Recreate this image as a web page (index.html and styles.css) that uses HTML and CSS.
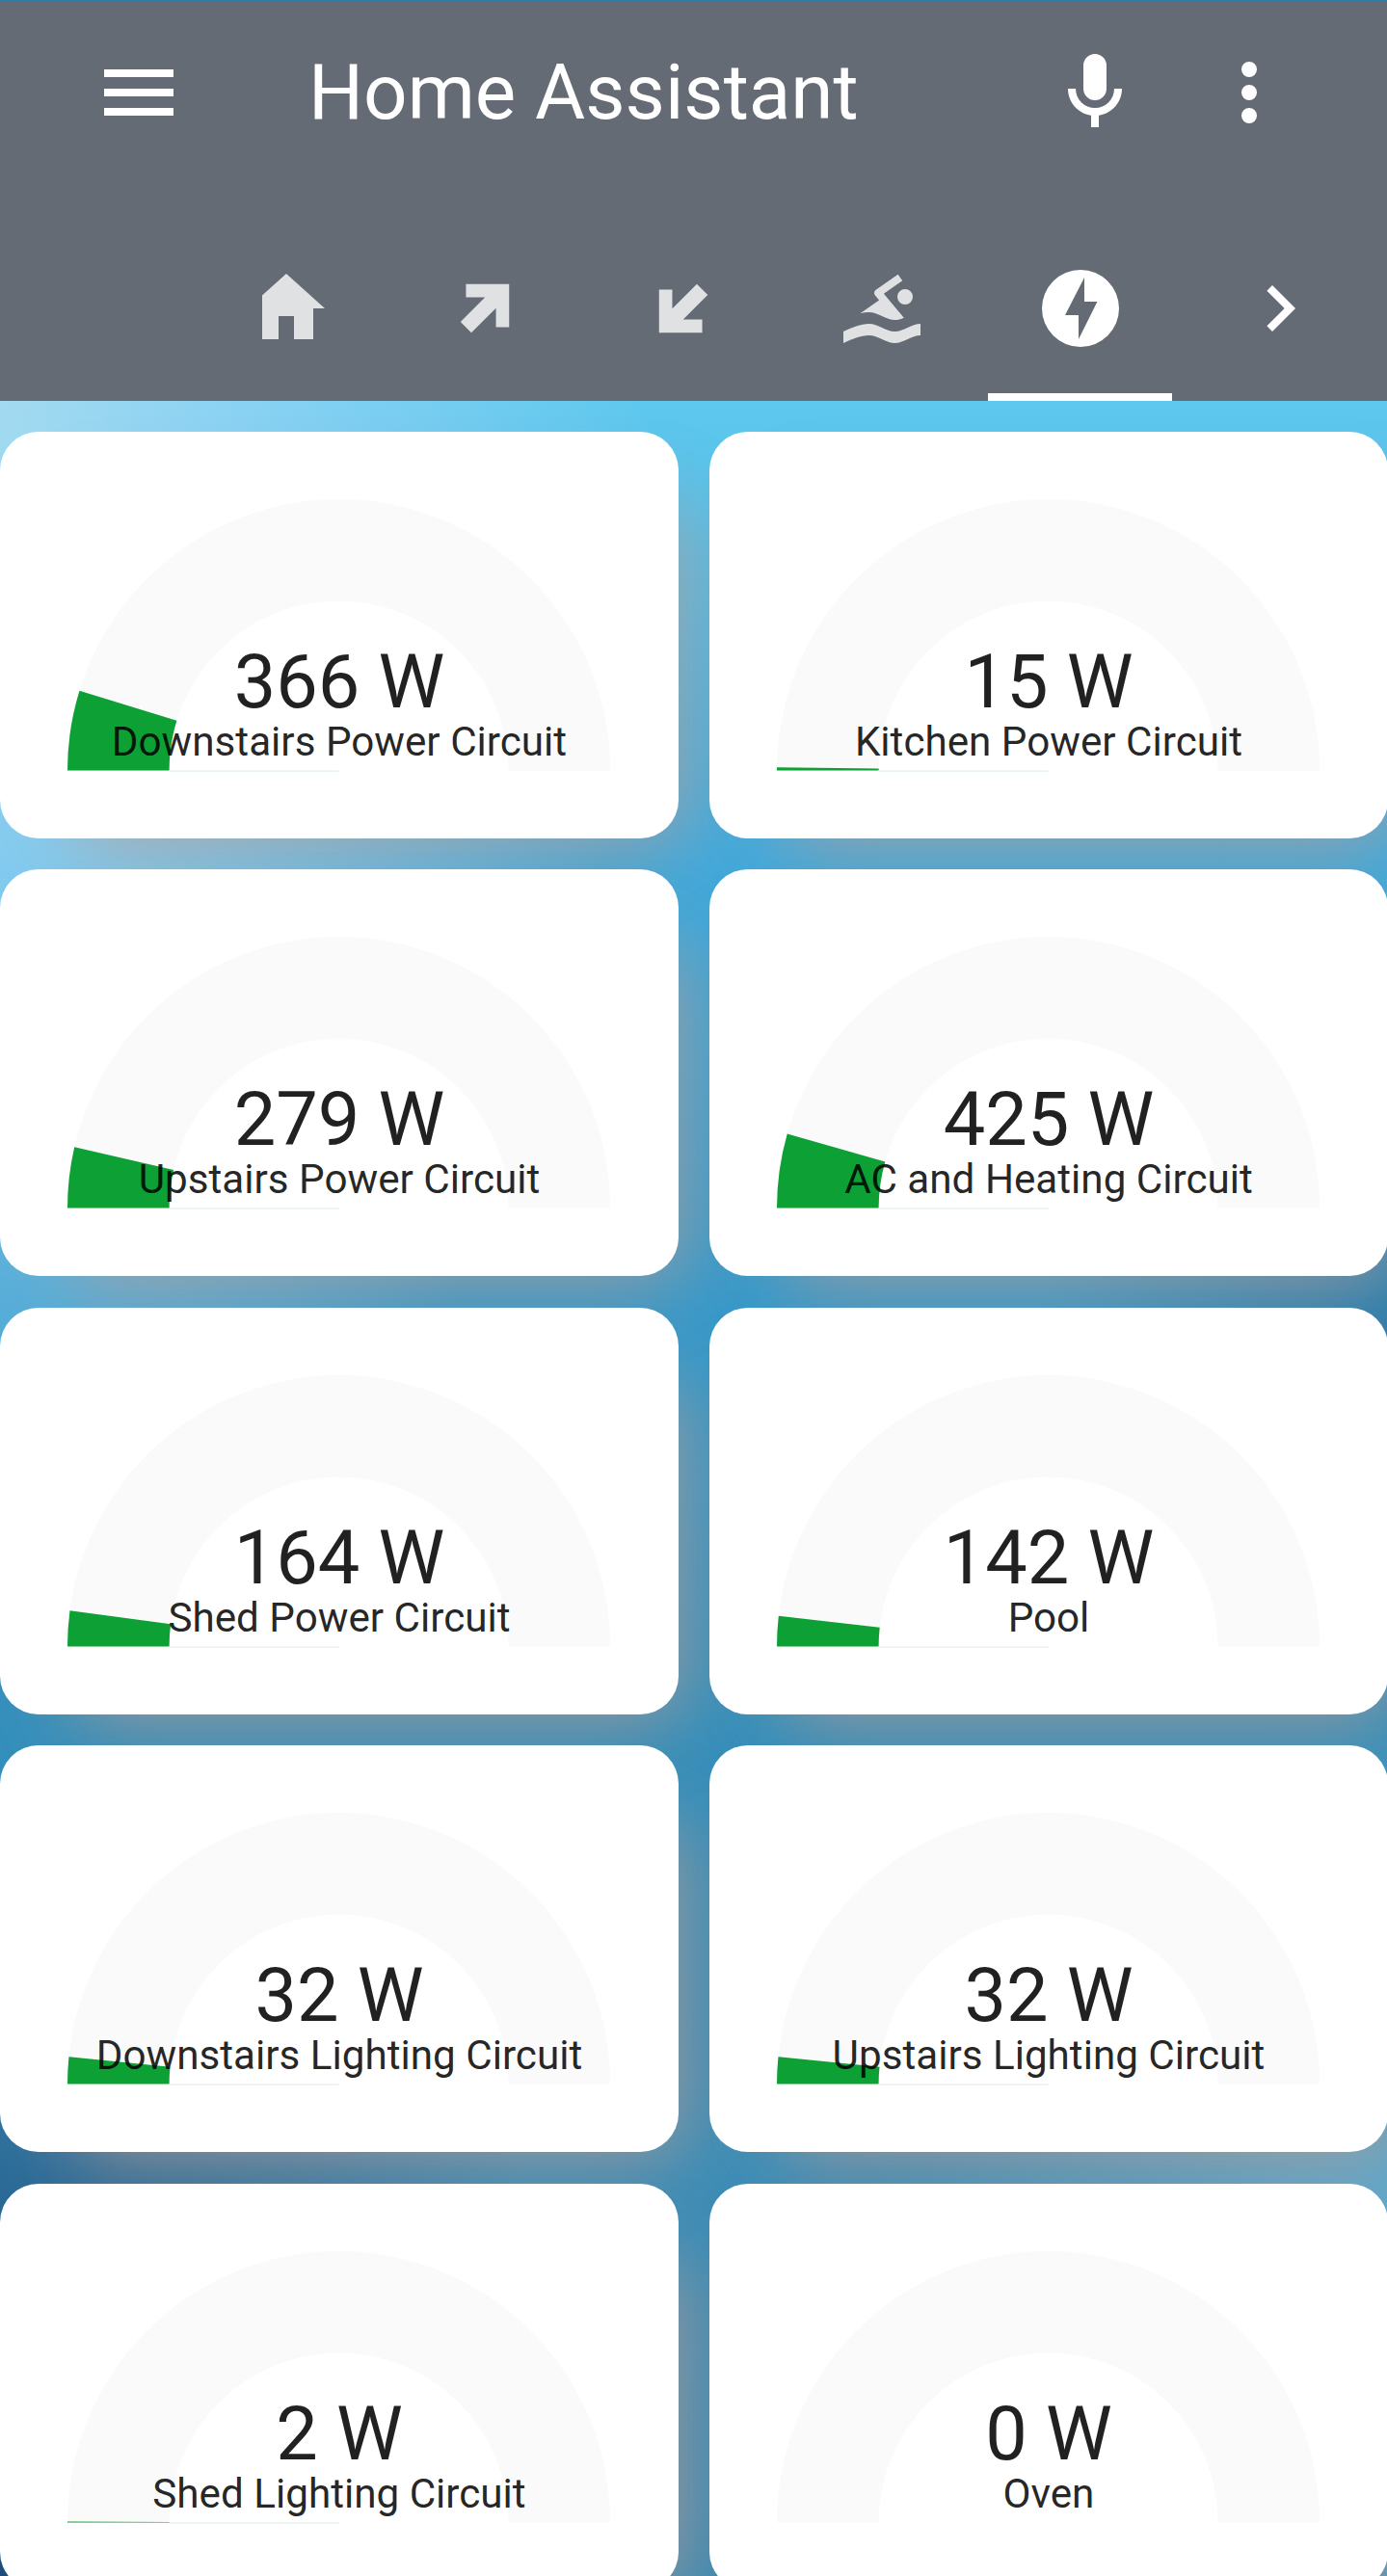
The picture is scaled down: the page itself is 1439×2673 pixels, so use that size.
FILE: index.html
```
<!DOCTYPE html>
<html lang="en">

<head>
    <meta charset="UTF-8">
    <meta name="viewport" content="width=device-width, initial-scale=1.0">
    <title>Home Assistant</title>
    <link rel="stylesheet" href="styles.css">
</head>

<body>
    <header class="header">
        <div class="toolbar">
            <svg class="icon" viewBox="0 0 24 24"><path d="M3,6H21V8H3V6M3,11H21V13H3V11M3,16H21V18H3V16Z" /></svg>
            <h1 class="title">Home Assistant</h1>
            <svg class="icon mic" viewBox="0 0 24 24"><path d="M12,2A3,3 0 0,1 15,5V11A3,3 0 0,1 12,14A3,3 0 0,1 9,11V5A3,3 0 0,1 12,2M19,11C19,14.53 16.39,17.44 13,17.93V21H11V17.93C7.61,17.44 5,14.53 5,11H7A5,5 0 0,0 12,16A5,5 0 0,0 17,11H19Z" /></svg>
            <svg class="icon" viewBox="0 0 24 24"><path d="M12,16A2,2 0 0,1 14,18A2,2 0 0,1 12,20A2,2 0 0,1 10,18A2,2 0 0,1 12,16M12,10A2,2 0 0,1 14,12A2,2 0 0,1 12,14A2,2 0 0,1 10,12A2,2 0 0,1 12,10M12,4A2,2 0 0,1 14,6A2,2 0 0,1 12,8A2,2 0 0,1 10,6A2,2 0 0,1 12,4Z" /></svg>
        </div>
        <nav class="nav">
            <div class="tabs">
                <div class="tab">
                    <svg class="icon" viewBox="0 0 24 24"><path d="M10,20V14H14V20H19V12H22L12,3L2,12H5V20H10Z" /></svg>
                </div>
                <div class="tab">
                    <svg class="icon" viewBox="0 0 24 24"><path d="M8.5,18.31L5.69,15.5L12.06,9.12H7.11V5.69H18.31V16.89H14.89V11.94L8.5,18.31Z" /></svg>
                </div>
                <div class="tab">
                    <svg class="icon" viewBox="0 0 24 24"><path d="M15.5,5.69L18.31,8.5L11.94,14.89H16.89V18.31H5.69V7.11H9.12V12.06L15.5,5.69Z" /></svg>
                </div>
                <div class="tab">
                    <svg class="icon" viewBox="0 0 24 24"><path d="M2,18C4.22,17 6.44,16 8.67,16C10.89,16 13.11,18 15.33,18C17.56,18 19.78,16 22,16V19C19.78,19 17.56,21 15.33,21C13.11,21 10.89,19 8.67,19C6.44,19 4.22,20 2,21V18M8.67,13C7.89,13 7.12,13.12 6.35,13.32L11.27,9.88L10.23,8.64C10.09,8.47 10,8.24 10,8C10,7.66 10.17,7.35 10.44,7.17L16.16,3.17L17.31,4.8L12.47,8.19L17.7,14.42C16.91,14.75 16.12,15 15.33,15C13.11,15 10.89,13 8.67,13M18,7A2,2 0 0,1 20,9A2,2 0 0,1 18,11A2,2 0 0,1 16,9A2,2 0 0,1 18,7Z" /></svg>
                </div>
                <div class="tab active">
                    <svg class="icon" viewBox="0 0 24 24"><path d="M12,2A10,10 0 0,1 22,12A10,10 0 0,1 12,22A10,10 0 0,1 2,12A10,10 0 0,1 12,2M11.5,20L16.36,10.27H13V4L8,13.73H11.5V20Z" /></svg>
                </div>
            </div>
            <svg class="icon next" viewBox="0 0 24 24"><path d="M8.59,16.58L13.17,12L8.59,7.41L10,6L16,12L10,18L8.59,16.58Z" /></svg>
        </nav>
    </header>

    <main class="cards"></main>

    <script>
        // angle is the filled part of the half circle, in degrees
        const gauges = [
            { name: "Downstairs Power Circuit", watts: 366, angle: 17.1 },
            { name: "Kitchen Power Circuit", watts: 15, angle: 0.7 },
            { name: "Upstairs Power Circuit", watts: 279, angle: 13 },
            { name: "AC and Heating Circuit", watts: 425, angle: 15.9 },
            { name: "Shed Power Circuit", watts: 164, angle: 7.6 },
            { name: "Pool", watts: 142, angle: 6.5 },
            { name: "Downstairs Lighting Circuit", watts: 32, angle: 5.8 },
            { name: "Upstairs Lighting Circuit", watts: 32, angle: 5.8 },
            { name: "Shed Lighting Circuit", watts: 2, angle: 0.2 },
            { name: "Oven", watts: 0, angle: 0 },
        ];

        const R = 281.6;
        const INNER = 176;

        const arc = (angle) => {
            const a = angle * Math.PI / 180;
            const x = (r) => R - r * Math.cos(a);
            const y = (r) => R - r * Math.sin(a);
            return `M0,${R} A${R},${R} 0 0,1 ${x(R)},${y(R)} L${x(INNER)},${y(INNER)} A${INNER},${INNER} 0 0,0 ${R - INNER},${R} Z`;
        };

        const cards = document.querySelector(".cards");

        gauges.forEach((g) => {
            const line = g.angle > 0 ? `<path class="base-line" d="M${R - INNER},${R + 0.5} H${R}" />` : "";
            cards.innerHTML += `
                <div class="card">
                    <svg class="gauge" viewBox="0 0 563.2 283">
                        <path class="dial" d="${arc(180)}" />
                        <path class="level" d="${arc(g.angle)}" />
                        ${line}
                    </svg>
                    <div class="data">
                        <p class="value">${g.watts} W</p>
                        <p class="name">${g.name}</p>
                    </div>
                </div>`;
        });
    </script>
</body>

</html>
```
FILE: styles.css
```
* {
    margin: 0;
    padding: 0;
    box-sizing: border-box;
}

body {
    height: 2673px;
    overflow: hidden;
    font-family: Roboto, sans-serif;
    background:
        radial-gradient(circle at 0 2600px, #1b4674 0, rgba(27, 100, 145, 0) 640px),
        radial-gradient(circle at 1439px 2300px, #5eaace 0, rgba(94, 170, 206, 0) 520px),
        radial-gradient(circle at 1439px 1400px, rgba(36, 112, 159, 0.7) 0, rgba(36, 112, 159, 0) 360px),
        radial-gradient(ellipse 680px 1300px at 0 416px, rgba(166, 219, 240, 0.95) 0, rgba(150, 213, 245, 0.8) 35%, rgba(150, 213, 245, 0) 100%),
        linear-gradient(#5ec8ee 416px, #40aadd 885px, #369acb 1340px, #338fbc 1795px, #3a8db8 2250px, #3a8ab4);
}

.header {
    height: 416px;
    background-color: #646b74;
    border-top: 2px solid #2f7ba6;
}

.toolbar {
    height: 222px;
    padding: 46px 95px 0 96px;
    display: flex;
    align-items: flex-start;
}

.icon {
    width: 96px;
    height: 96px;
    flex: none;
    fill: white;
}

.title {
    flex: 1;
    padding-left: 128px;
    font-size: 80px;
    font-weight: 400;
    line-height: 96px;
    color: white;
}

.mic {
    margin-right: 64px;
}

.nav {
    height: 192px;
    padding-left: 272px;
    padding-right: 63px;
    display: flex;
    align-items: center;
    justify-content: space-between;
}

.tabs {
    display: flex;
    overflow: hidden;
}

.tab {
    width: 206px;
    height: 192px;
    display: flex;
    align-items: center;
    justify-content: center;
    flex: none;
}

/* the tab bar is scrolled a bit, the first icon is cut */
.tab:first-child {
    margin-left: -78px;
}

.tab .icon {
    opacity: 0.8;
}

.tab.active {
    width: 191px;
    margin-left: 7px;
    border-bottom: 8px solid white;
    padding-top: 8px;
}

.tab.active .icon {
    opacity: 1;
}

.cards {
    display: grid;
    grid-template-columns: 704px 704px;
    grid-auto-rows: 422px;
    gap: 32.4px 32px;
    padding-top: 32px;
}

.card {
    display: grid;
    justify-items: center;
    background-color: white;
    border-radius: 40px;
    box-shadow: 40px 40px 80px -40px rgba(185, 155, 145, 0.9);
}

.gauge,
.data {
    grid-area: 1 / 1;
}

.gauge {
    width: 563.2px;
    height: 283px;
    margin-top: 70px;
}

.dial {
    fill: #fafafa;
}

.level {
    fill: #0da035;
}

.base-line {
    stroke: #dcebe2;
    stroke-width: 1;
}

.data {
    padding-top: 220px;
    text-align: center;
    color: rgba(0, 0, 0, 0.87);
}

.value {
    font-size: 77.5px;
    line-height: 80px;
}

.name {
    font-size: 42.2px;
    line-height: 43px;
}
```
